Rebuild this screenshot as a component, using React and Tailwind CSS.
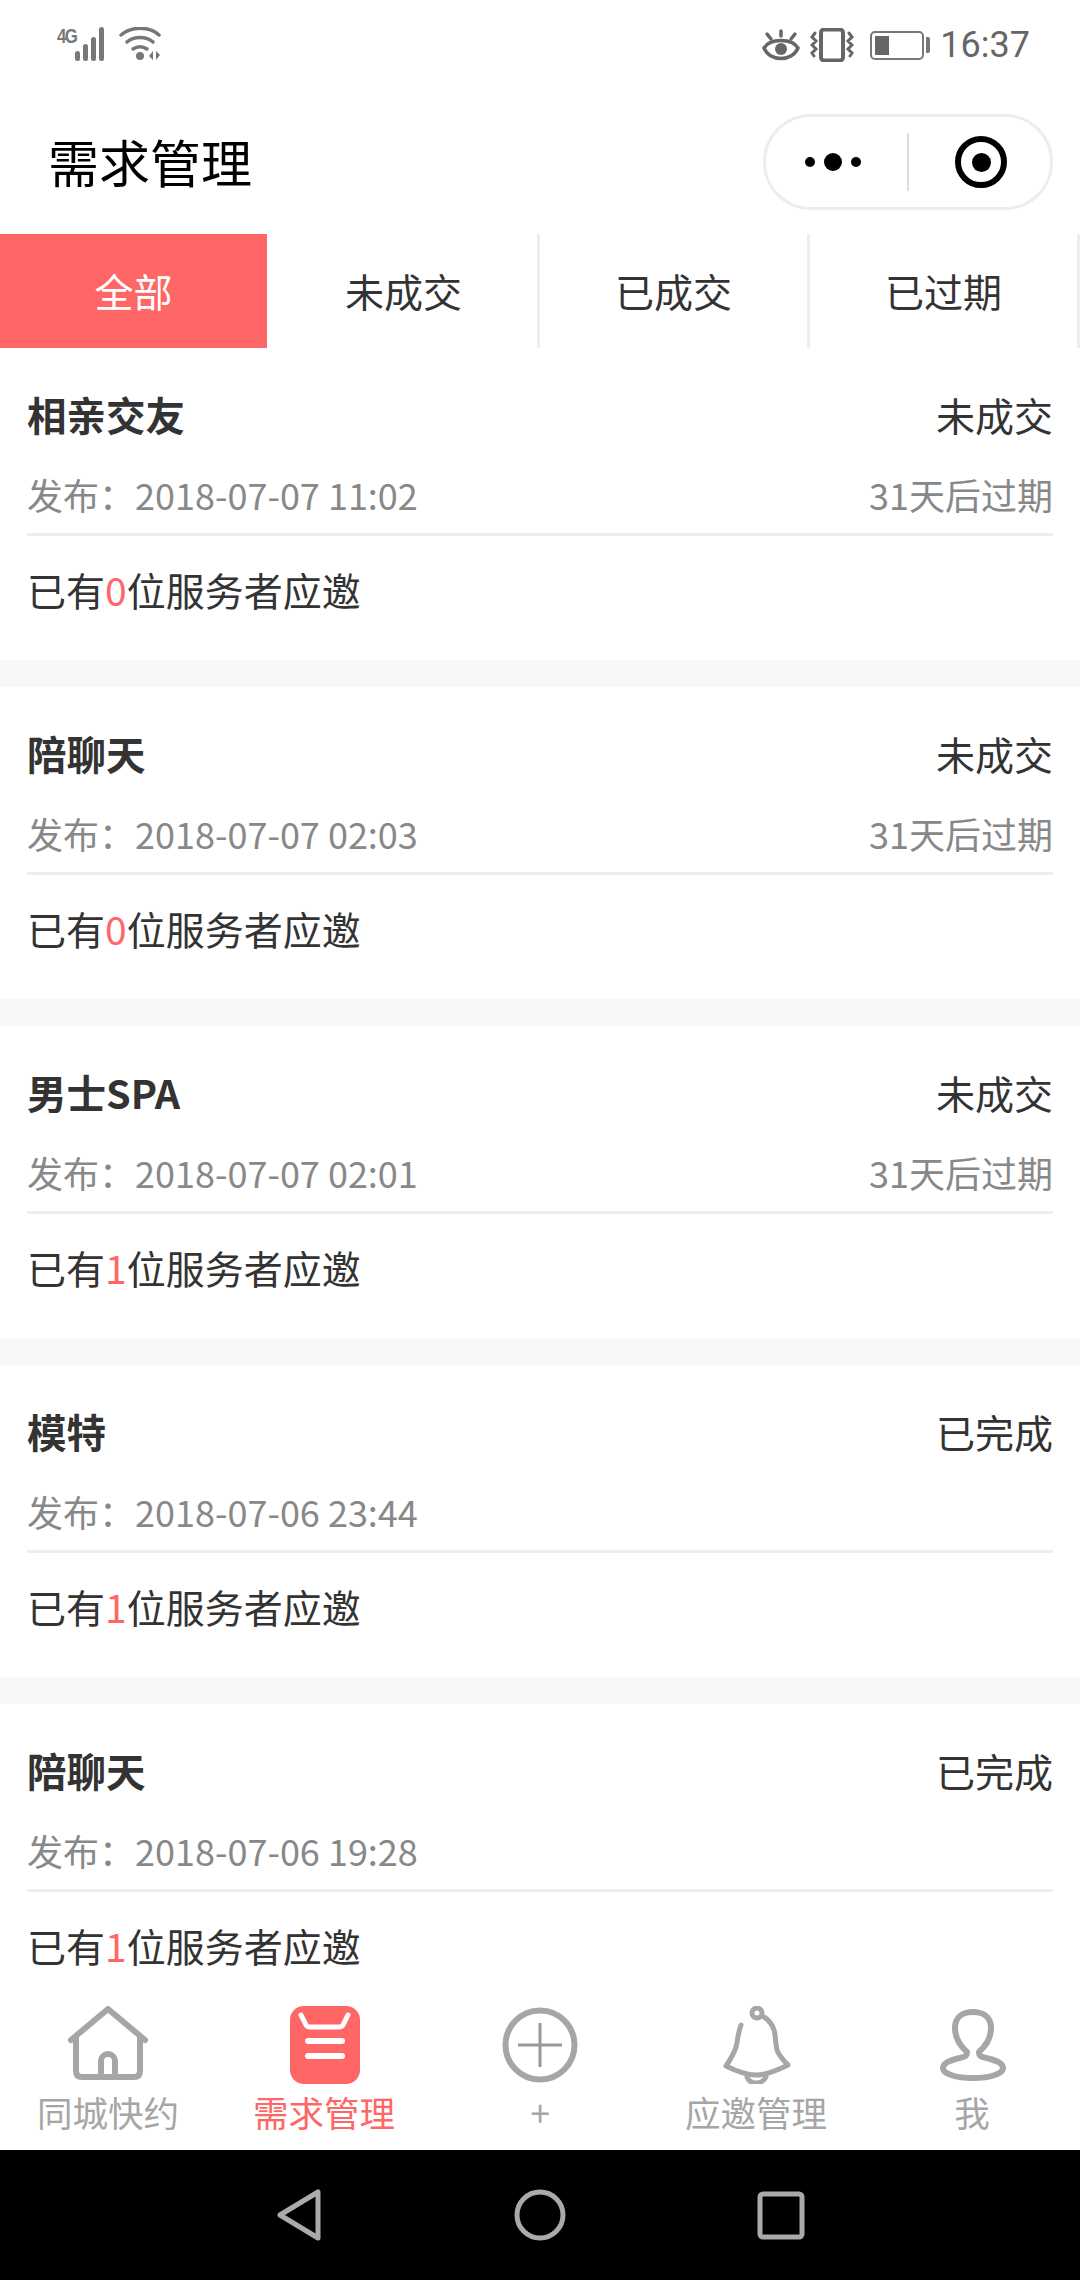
import React from "react";

const TABS = ["全部", "未成交", "已成交", "已过期"];

const ORDERS = [
  { title: "相亲交友", status: "未成交", date: "2018-07-07 11:02", expire: "31天后过期", count: 0 },
  { title: "陪聊天", status: "未成交", date: "2018-07-07 02:03", expire: "31天后过期", count: 0 },
  { title: "男士SPA", status: "未成交", date: "2018-07-07 02:01", expire: "31天后过期", count: 1 },
  { title: "模特", status: "已完成", date: "2018-07-06 23:44", count: 1 },
  { title: "陪聊天", status: "已完成", date: "2018-07-06 19:28", count: 1 },
];

function HomeIcon() {
  return (
    <svg width="80" height="78" viewBox="0 0 80 78" fill="none" stroke="#a6a6a6" strokeWidth="6" strokeLinecap="round" strokeLinejoin="round">
      <path d="M3 34L40 3L77 34" />
      <path d="M8 32V65Q8 71 14 71H66Q72 71 72 65V32" />
      <path d="M33 71V55A7 7 0 0 1 47 55V71" />
    </svg>
  );
}

function OrdersIcon() {
  return (
    <svg width="80" height="78" viewBox="0 0 80 78" fill="none">
      <rect x="6" y="0" width="70" height="78" rx="14" fill="#ff6666" />
      <path d="M17 9L22 19Q23 21 26 21H55Q58 21 59 19L64 9" stroke="#fff" strokeWidth="5" strokeLinecap="round" />
      <path d="M24 35H58M24 50H58" stroke="#fff" strokeWidth="6" strokeLinecap="round" />
    </svg>
  );
}

function PlusIcon() {
  return (
    <svg width="80" height="78" viewBox="0 0 80 78" fill="none">
      <circle cx="40" cy="39" r="34.5" stroke="#a6a6a6" strokeWidth="6" />
      <path d="M18 39H62M40 17V61" stroke="#999" strokeWidth="3" />
    </svg>
  );
}

function BellIcon() {
  return (
    <svg width="80" height="78" viewBox="0 0 80 78" fill="none" stroke="#a6a6a6" strokeWidth="5" strokeLinecap="round" strokeLinejoin="round">
      <circle cx="41" cy="7" r="5" />
      <path d="M25 19C22 26 22 34 20 41C18 48 14 54 10 60C20 65 30 69 40 69C51 69 62 64 72 59C67 54 63 50 61 44C59 36 60 30 58 24C56 18 53 14 48 11" />
      <path d="M31 71C33 76 37 77 40 77C44 77 48 75 50 71" />
    </svg>
  );
}

function UserIcon() {
  return (
    <svg width="80" height="78" viewBox="0 0 80 78" fill="none" stroke="#a6a6a6" strokeWidth="6" strokeLinejoin="round">
      <path d="M35 46C26 38 23 29 23 22C23 11 31 6 41 6C51 6 59 11 59 22C59 29 56 38 47 46C47 52 52 51 58 53C66 55 71 58 71 62C71 68 58 72 41 72C24 72 11 68 11 62C11 58 16 55 24 53C30 51 35 52 35 46Z" />
    </svg>
  );
}

const NAV = [
  { label: "同城快约", icon: <HomeIcon /> },
  { label: "需求管理", icon: <OrdersIcon />, active: true },
  { label: "+", icon: <PlusIcon /> },
  { label: "应邀管理", icon: <BellIcon /> },
  { label: "我", icon: <UserIcon /> },
];

function StatusBar() {
  return (
    <div className="h-[90px] flex items-center justify-between pl-[57px] pr-[50px] text-[#666]">
      <div className="flex items-start h-[36px]">
        <span className="font-['Liberation_Sans',sans-serif] font-bold text-[21px] leading-[18px] w-[18px] -tracking-[2px] text-[#777] origin-left scale-x-[0.8]">4G</span>
        <svg width="88" height="36" viewBox="0 0 88 36" fill="none">
          <g fill="#777">
            <rect x="0" y="24" width="5" height="10" rx="2.5" />
            <rect x="8" y="17" width="5" height="17" rx="2.5" />
            <rect x="16" y="10" width="5" height="24" rx="2.5" />
            <rect x="24" y="0" width="5" height="34" rx="2.5" />
            <circle cx="65" cy="29" r="4" />
            <path d="M78 24L74 29L78 33ZM81 24V33L85 28Z" />
          </g>
          <g stroke="#777" strokeWidth="3.5" fill="none" strokeLinecap="round">
            <path d="M46 8C57 -1 74 -1 84 8" />
            <path d="M52 15C59 9 71 9 78 15" />
            <path d="M58 22C62 19 68 19 72 22" />
          </g>
        </svg>
      </div>
      <div className="flex items-center">
        <svg width="38" height="32" viewBox="0 0 38 32" fill="none" stroke="#666" strokeWidth="3.5" strokeLinecap="round">
          <path d="M2 19C8 9 30 9 36 19C30 33 8 33 2 19Z" />
          <circle cx="19" cy="20" r="6" fill="#666" stroke="none" />
          <path d="M19 2V7M5 5L9 10M33 5L29 10" />
        </svg>
        <svg className="ml-[10px]" width="44" height="34" viewBox="0 0 44 34" fill="none" stroke="#666" strokeLinecap="round">
          <rect x="11" y="1.5" width="22" height="31" rx="3" strokeWidth="4" />
          <path d="M5 5L2 9L6 13L2 17L6 21L2 25L4 28M39 5L42 9L38 13L42 17L38 21L42 25L40 28" strokeWidth="3" />
        </svg>
        <div className="ml-[16px] flex items-center">
          <div className="w-[54px] h-[29px] border-2 border-[#777] rounded-[5px] p-[3px]">
            <div className="w-[14px] h-full bg-[#666]" />
          </div>
          <div className="w-[4px] h-[16px] ml-[2px] bg-[#777] rounded-r-[2px]" />
        </div>
        <span className="ml-[10px] font-['Roboto',sans-serif] text-[36px] leading-none text-[#666]">16:37</span>
      </div>
    </div>
  );
}

function TitleBar() {
  return (
    <div className="h-[144px] flex items-center justify-between pl-[48px] pr-[27px]">
      <h1 className="text-[51px] leading-none font-normal text-black -translate-y-[1px]">需求管理</h1>
      <div className="w-[290px] h-[96px] rounded-full border-[3px] border-[#ededed] flex items-center">
        <div className="w-[141px] flex items-center justify-center gap-[9px] pr-[8px]">
          <span className="w-[10px] h-[10px] rounded-full bg-black" />
          <span className="w-[18px] h-[18px] rounded-full bg-black" />
          <span className="w-[10px] h-[10px] rounded-full bg-black" />
        </div>
        <div className="w-[2px] h-[58px] bg-[#ddd]" />
        <div className="flex-1 flex items-center justify-center pl-[3px]">
          <div className="w-[52px] h-[52px] rounded-full border-[6px] border-black flex items-center justify-center">
            <span className="w-[19px] h-[19px] rounded-full bg-black" />
          </div>
        </div>
      </div>
    </div>
  );
}

function OrderCard({ order }) {
  return (
    <div className="bg-white h-[312px] shrink-0 px-[27px] pt-[36px]">
      <div className="flex items-center justify-between h-[60px] text-[#333]">
        <span className="text-[39.5px] font-bold">{order.title}</span>
        <span className="text-[39px]">{order.status}</span>
      </div>
      <div className="mt-[22px] h-[70px] pb-[12px] border-b-[3px] border-[#eee] flex items-center justify-between text-[36px] text-[#888]">
        <span>发布：{order.date}</span>
        {order.expire && <span>{order.expire}</span>}
      </div>
      <div className="h-[106px] flex items-center text-[39px] text-[#333]">
        已有<span className="text-[#ff6666]">{order.count}</span>位服务者应邀
      </div>
    </div>
  );
}

export default function App() {
  return (
    <div className="w-[1080px] h-[2280px] flex flex-col bg-white overflow-hidden font-['Noto_Sans_CJK_SC',sans-serif]">
      <StatusBar />
      <TitleBar />

      <div className="grid grid-cols-4 h-[114px] shrink-0">
        {TABS.map((t, i) => (
          <div key={t} className={i === 0
            ? "flex items-center justify-center text-[39px] pb-[2px] bg-[#ff6666] text-white mr-[3px]"
            : "flex items-center justify-center text-[39px] pb-[2px] text-[#333] border-r-[3px] border-[#eee]"}>
            {t}
          </div>
        ))}
      </div>

      <div className="flex-1 min-h-0 overflow-hidden bg-[#f8f8f8] flex flex-col gap-[27px]">
        {ORDERS.map((o, i) => <OrderCard key={i} order={o} />)}
      </div>

      <div className="h-[160px] shrink-0 bg-white grid grid-cols-5 pt-[16px]">
        {NAV.map((n) => (
          <div key={n.label} className="flex flex-col items-center">
            {n.icon}
            <span className={n.active
              ? "h-[58px] leading-[56px] text-[35.5px] text-[#ff6666]"
              : "h-[58px] leading-[56px] text-[35.5px] text-[#a6a6a6]"}>{n.label}</span>
          </div>
        ))}
      </div>

      <div className="h-[130px] shrink-0 bg-black flex items-center">
        <svg width="1080" height="130" viewBox="0 0 1080 130" fill="none" stroke="#aaa" strokeWidth="5" strokeLinejoin="round">
          <path d="M318 42V88L280 65Z" />
          <circle cx="540" cy="65" r="23" />
          <rect x="760" y="44" width="42" height="43" rx="3" />
        </svg>
      </div>
    </div>
  );
}
